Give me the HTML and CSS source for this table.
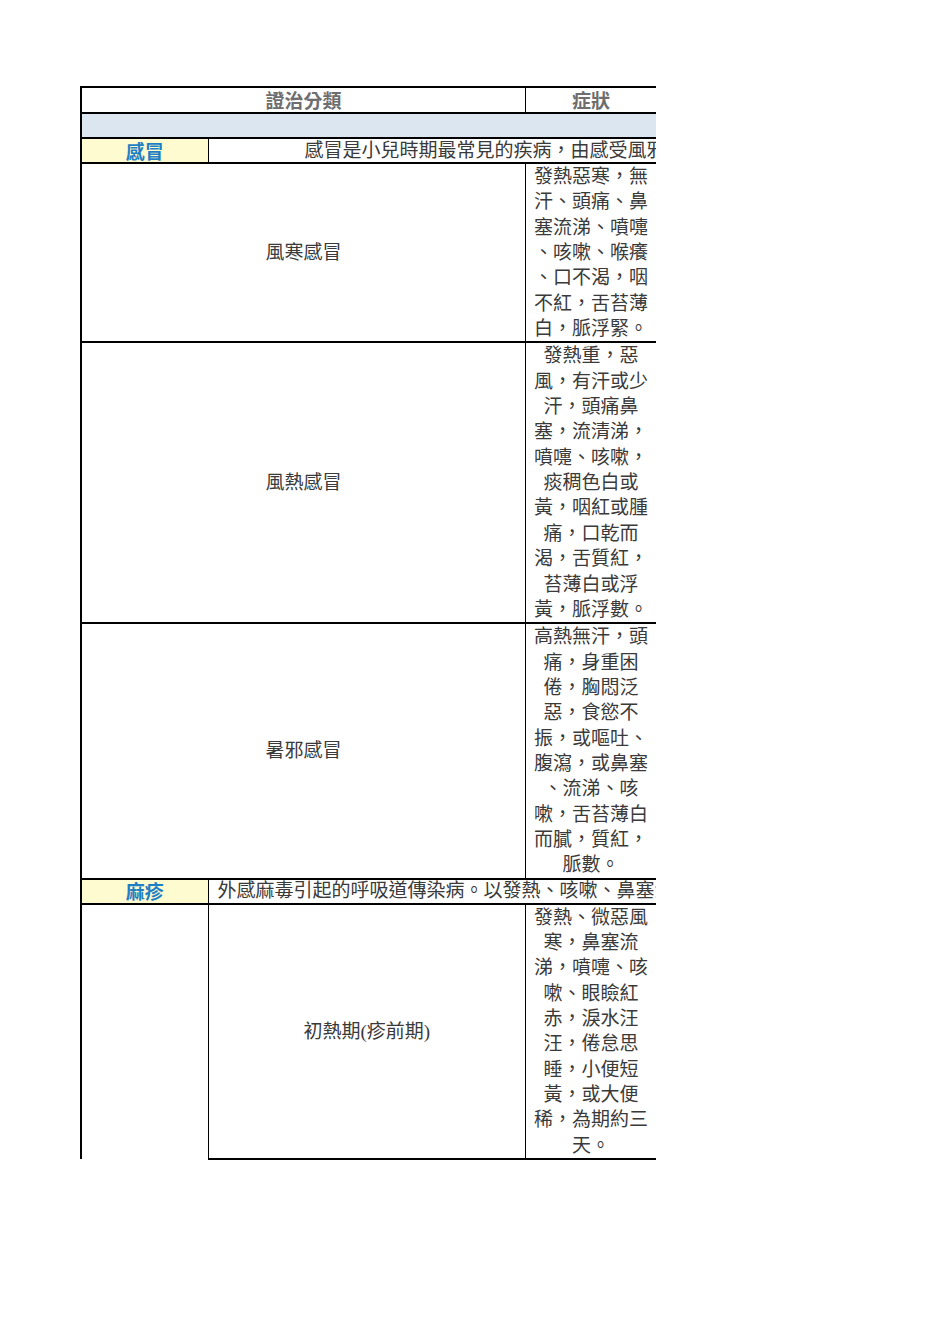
FILE: index.html
```html
<!DOCTYPE html>
<html lang="zh-Hant">
<head>
<meta charset="utf-8">
<title>證治分類</title>
<link rel="stylesheet" href="styles.css">
</head>
<body>
<div class="sheet">
  <table class="grid">
    <colgroup>
      <col class="c1">
      <col class="c2">
      <col class="c3">
    </colgroup>
    <tr class="r-head">
      <th colspan="2" class="head">證治分類</th>
      <th class="head head-last">症狀</th>
    </tr>
    <tr class="r-band">
      <td colspan="3" class="band"></td>
    </tr>
    <tr class="r-cat">
      <td class="cat">感冒</td>
      <td colspan="2" class="desc desc-center"><span>感冒是小兒時期最常見的疾病，由感受風邪所致，以發熱、鼻塞流涕、噴嚏、咳嗽為主要表現。</span></td>
    </tr>
    <tr>
      <td colspan="2" class="name">風寒感冒</td>
      <td class="sym">發熱惡寒，無<br>汗、頭痛、鼻<br>塞流涕、噴嚏<br>、咳嗽、喉癢<br>、口不渴，咽<br>不紅，舌苔薄<br>白，脈浮緊。</td>
    </tr>
    <tr>
      <td colspan="2" class="name">風熱感冒</td>
      <td class="sym">發熱重，惡<br>風，有汗或少<br>汗，頭痛鼻<br>塞，流清涕，<br>噴嚏、咳嗽，<br>痰稠色白或<br>黃，咽紅或腫<br>痛，口乾而<br>渴，舌質紅，<br>苔薄白或浮<br>黃，脈浮數。</td>
    </tr>
    <tr>
      <td colspan="2" class="name">暑邪感冒</td>
      <td class="sym">高熱無汗，頭<br>痛，身重困<br>倦，胸悶泛<br>惡，食慾不<br>振，或嘔吐、<br>腹瀉，或鼻塞<br>、流涕、咳<br>嗽，舌苔薄白<br>而膩，質紅，<br>脈數。</td>
    </tr>
    <tr class="r-cat">
      <td class="cat">麻疹</td>
      <td colspan="2" class="desc desc-left"><span>外感麻毒引起的呼吸道傳染病。以發熱、咳嗽、鼻塞流涕、淚水汪汪、全身布發紅色斑丘疹為特徵。</span></td>
    </tr>
    <tr>
      <td class="blank"></td>
      <td class="name">初熱期(疹前期)</td>
      <td class="sym">發熱、微惡風<br>寒，鼻塞流<br>涕，噴嚏、咳<br>嗽、眼瞼紅<br>赤，淚水汪<br>汪，倦怠思<br>睡，小便短<br>黃，或大便<br>稀，為期約三<br>天。</td>
    </tr>
  </table>
</div>
</body>
</html>
```

FILE: styles.css
```css
html, body {
  margin: 0;
  padding: 0;
  background: #ffffff;
}

body {
  font-family: "Liberation Serif", "Noto Sans CJK TC", serif;
  color: #3a3a3a;
}

.sheet {
  margin: 86px 0 0 80px;
  width: 576px;
  overflow: hidden;
}

.grid {
  border-collapse: collapse;
  table-layout: fixed;
  width: 577px;
  border-left: 2px solid #000;
  border-top: 2px solid #000;
}

.c1 { width: 127px; }
.c2 { width: 317px; }
.c3 { width: 131px; }

.grid td,
.grid th {
  padding: 0;
  border-bottom: 2px solid #000;
  border-right: 1px solid #000;
  vertical-align: middle;
  font-weight: 400;
}

.r-head th {
  height: 24px;
}

.head {
  font-family: "Noto Sans CJK TC", sans-serif;
  font-weight: 700 !important;
  font-size: 19px;
  line-height: 22px;
  color: #6e6e6e;
  text-align: center;
}

.band {
  height: 23px;
  background: #dce6f1;
  border-right: none !important;
}

.r-cat td {
  height: 23px;
}

.cat {
  background: #fffbd0;
  color: #1f7fc4;
  font-family: "Noto Sans CJK TC", sans-serif;
  font-weight: 700 !important;
  font-size: 19px;
  line-height: 22px;
  text-align: center;
}

.desc {
  white-space: nowrap;
  overflow: hidden;
  font-size: 19px;
  line-height: 22px;
  border-right: none !important;
}

.desc-center {
  padding-left: 96px !important;
}

.desc-left {
  padding-left: 9px !important;
}

.name {
  font-size: 19px;
  line-height: 25px;
  text-align: center;
}

.sym {
  font-size: 19px;
  line-height: 25.35px;
  text-align: center;
  padding: 0 !important;
}

.blank {
  border-bottom: none !important;
}
```
